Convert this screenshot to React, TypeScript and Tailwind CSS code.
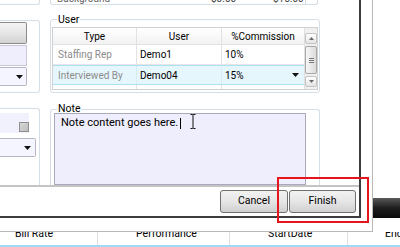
import React from "react";

const font = { fontFamily: 'Roboto, "Noto Sans", sans-serif' };

function Arrow({ className = "" }: { className?: string }) {
  return (
    <svg width="7" height="4" viewBox="0 0 7 4" className={className}>
      <path d="M0 0 H7 L3.5 4 Z" fill="#111" />
    </svg>
  );
}

export default function App() {
  return (
    <div className="w-[400px] h-[247px] overflow-hidden bg-white relative text-[10px] text-black" style={font}>
      <div className="flex h-[232px]">
        {/* dialog with frame */}
        <div className="w-[373px] h-[232px] border-r border-b border-[#b8b8b8] bg-white">
          <div className="w-[361px] h-[218px] border-r-2 border-b-2 border-[#3c3c3c] flex flex-col">
            {/* content panel */}
            <div className="h-[187px] flex border-b-2 border-[#c4c4c4]">
              {/* left column */}
              <div className="w-[40px] flex flex-col">
                <div className="h-[5px] border-r border-b border-[#d5dde5] rounded-br-[3px]" />
                <div className="mt-[15px] h-[73px] border-r border-y border-[#d5dde5] rounded-r-[3px] flex flex-col pt-[1px]">
                  <div className="w-[27px] h-[22px] border border-l-0 border-[#8a8a8a] rounded-r-[2px] bg-gradient-to-b from-[#f4f4f4] via-[#e6e6e6] to-[#d2d2d2]" />
                  <div className="w-[27px] h-[21px] mt-[1px] border border-l-0 border-[#c8c8d8] bg-[#eeeefd]" />
                  <div className="w-[27px] h-[19px] mt-[1px] border border-l-0 border-[#b8b8c4] rounded-r-[2px] bg-[#f5f5ff] flex items-center justify-end pr-[3px]">
                    <Arrow />
                  </div>
                </div>
                <div className="mt-[15px] flex-1 border-r border-t border-[#d5dde5] rounded-tr-[3px] flex flex-col pt-[4px]">
                  <div className="w-[29px] h-[20px] bg-[#f1f1fd] flex items-end justify-end pb-[1px]">
                    <div className="w-[10px] h-[10px] border border-[#8f8f8f] bg-gradient-to-br from-[#d8d8d8] to-[#bdbdbd]" />
                  </div>
                  <div className="w-[36px] h-[19px] mt-[5px] border border-l-0 border-[#b8b8c4] rounded-r-[2px] bg-[#f5f5ff] flex items-center justify-end pr-[4px]">
                    <Arrow />
                  </div>
                </div>
              </div>
              {/* right column */}
              <div className="ml-[10px] w-[270px] flex flex-col">
                {/* remnant grid */}
                <div className="h-[5px] flex">
                  <div className="w-[268px] border-x border-b border-[#d5dde5] rounded-b-[3px] flex">
                    <div className="w-[255px] h-[4px] border-r border-[#d8d8d8] relative overflow-hidden">
                      <span className="absolute left-[6px] -top-[9px] text-[#666]">Background</span>
                      <span className="absolute left-[160px] -top-[9px] text-[#444]">$0.00</span>
                      <span className="absolute left-[222px] -top-[9px] text-[#444]">$15.00</span>
                    </div>
                  </div>
                </div>
                {/* User group */}
                <div className="mt-[14px] h-[74px] border border-[#d5dde5] rounded-[3px] relative px-[1px] pb-[1px] pt-[7px]">
                  <span className="absolute left-[6px] -top-[6px] bg-white px-[1px] text-[10.5px] leading-[12px]">User</span>
                  <div className="h-[63px] border border-[#d0d0d0] flex">
                    <div className="flex-1 flex flex-col">
                      <div className="h-[17px] flex border-b border-[#e2e2e2] bg-gradient-to-b from-white to-[#f2f2f2]">
                        <div className="w-[84px] border-r border-[#e2e2e2] flex items-center justify-center">Type</div>
                        <div className="w-[85px] border-r border-[#e2e2e2] flex items-center justify-center">User</div>
                        <div className="flex-1 flex items-center justify-center">%Commission</div>
                      </div>
                      <div className="h-[20px] flex border-b border-[#e6e6e6]">
                        <div className="w-[84px] border-r border-[#e2e2e2] flex items-center pl-[5px] text-[#8c8c8c]">Staffing Rep</div>
                        <div className="w-[85px] border-r border-[#e2e2e2] flex items-center pl-[3px]">Demo1</div>
                        <div className="flex-1 flex items-center pl-[3px]">10%</div>
                      </div>
                      <div className="h-[20px] flex border-y border-[#ade0f4] bg-[#e6f6fd]">
                        <div className="w-[84px] border-r border-[#d8ecf4] flex items-center pl-[5px] text-[#8c8c8c]">Interviewed By</div>
                        <div className="w-[85px] border-r border-[#d8ecf4] flex items-center pl-[3px]">Demo04</div>
                        <div className="flex-1 flex items-center pl-[3px] pr-[5px] justify-between">
                          <span>15%</span>
                          <Arrow />
                        </div>
                      </div>
                      <div className="flex-1 flex">
                        <div className="w-[84px] border-r border-[#e2e2e2]" />
                        <div className="w-[85px] border-r border-[#e2e2e2]" />
                      </div>
                    </div>
                    {/* scrollbar */}
                    <div className="w-[13px] flex flex-col bg-[#f0f0f0] border-l border-[#e0e0e0] pt-[5px] gap-[2px]">
                      <div className="h-[11px] border border-[#c4c4c4] rounded-[2px] bg-gradient-to-b from-white to-[#e4e4e4] flex items-center justify-center">
                        <svg width="5" height="3" viewBox="0 0 5 3"><path d="M0 3 L2.5 0 L5 3Z" fill="#6a6a6a" /></svg>
                      </div>
                      <div className="h-[28px] border border-[#a8a8a8] rounded-[2px] bg-gradient-to-r from-[#f6f6f6] to-[#dcdcdc] flex flex-col items-center justify-center gap-[1px]">
                        <div className="w-[5px] h-px bg-[#7a7a7a]" />
                        <div className="w-[5px] h-px bg-[#7a7a7a]" />
                        <div className="w-[5px] h-px bg-[#7a7a7a]" />
                      </div>
                      <div className="h-[11px] border border-[#c4c4c4] rounded-[2px] bg-gradient-to-b from-white to-[#e4e4e4] flex items-center justify-center">
                        <svg width="5" height="3" viewBox="0 0 5 3"><path d="M0 0 L2.5 3 L5 0Z" fill="#6a6a6a" /></svg>
                      </div>
                    </div>
                  </div>
                </div>
                {/* Note group */}
                <div className="mt-[16px] flex-1 border-x border-t border-[#d5dde5] rounded-t-[3px] relative pl-[3px] pt-[3px]">
                  <span className="absolute left-[6px] -top-[7px] bg-white px-[1px] text-[10.5px] leading-[12px]">Note</span>
                  <div className="w-[252px] h-[72px] border border-[#a9a9bd] bg-[#eeeefd] relative px-[6px] pt-[2px] text-[11px] leading-[13px]">
                    <span>Note content goes here.</span>
                    <span className="inline-block w-px h-[11px] bg-black align-middle ml-[2px]" />
                    <svg className="absolute left-[135px] top-[0px]" width="6" height="15" viewBox="0 0 6 15">
                      <path d="M0.5 0.5 H2.5 L3 1 L3.5 0.5 H5.5 M3 1 V14 M0.5 14.5 H2.5 L3 14 L3.5 14.5 H5.5" stroke="#111" strokeWidth="1" fill="none" />
                    </svg>
                  </div>
                </div>
              </div>
            </div>
            {/* button bar */}
            <div className="flex-1 flex justify-end items-start pt-[3px] pr-[3px] gap-[1px]">
              <button className="w-[68px] h-[23px] border border-[#707070] rounded-[3px] bg-gradient-to-b from-[#f2f2f2] via-[#e6e6e6] to-[#d0d0d0] text-[10.5px] leading-none">Cancel</button>
              <button className="w-[67px] h-[23px] border border-[#707070] rounded-[3px] bg-gradient-to-b from-[#f2f2f2] via-[#e6e6e6] to-[#d0d0d0] text-[10.5px] leading-none">Finish</button>
            </div>
          </div>
        </div>
        {/* area right of dialog */}
        <div className="flex-1 flex flex-col">
          <div className="h-[198px]" />
          <div className="h-[20px] bg-gradient-to-b from-[#5a5a5a] via-[#1e1e1e] to-[#0a0a0a]" />
        </div>
      </div>
      {/* underlying grid header */}
      <div className="h-[15px] flex border-b-2 border-[#9fdcf2] relative overflow-hidden text-[10.5px]">
        <div className="w-[98px] border-r border-[#e0e0e0] relative"><span className="absolute left-[15px] -top-[6px]">Bill Rate</span></div>
        <div className="w-[132px] border-r border-[#e0e0e0] relative"><span className="absolute left-[38px] -top-[6px]">Performance</span></div>
        <div className="w-[118px] border-r border-[#e0e0e0] relative"><span className="absolute left-[38px] -top-[6px]">StartDate</span></div>
        <div className="flex-1 relative"><span className="absolute left-[37px] -top-[6px]">EndDate</span></div>
      </div>
      {/* annotation */}
      <div className="absolute left-[277px] top-[177px] w-[92px] h-[46px] border-2 border-[#e8141c]" />
    </div>
  );
}
